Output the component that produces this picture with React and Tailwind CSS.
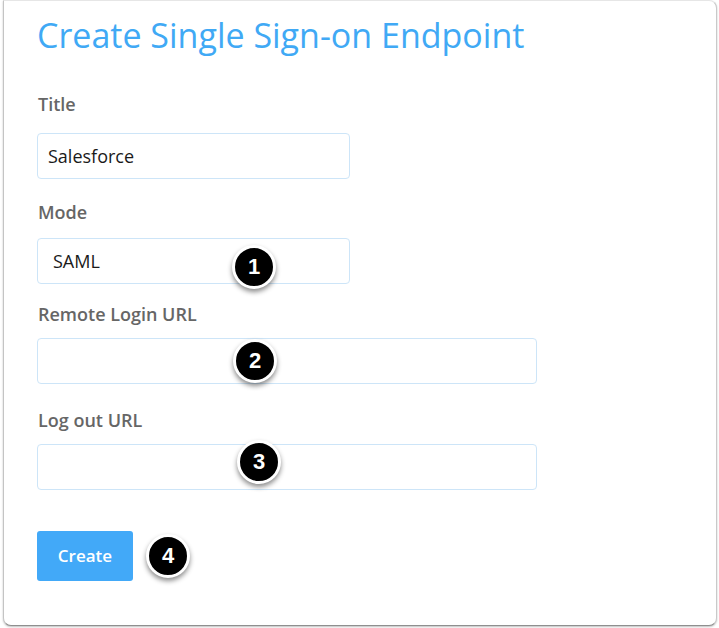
const fields = [
  { label: 'Title', value: 'Salesforce', wide: false, badge: null, labelTop: 'mt-[37px]', inputTop: 'mt-[17px]' },
  { label: 'Mode', value: 'SAML', wide: false, badge: '1', labelTop: 'mt-[21px]', inputTop: 'mt-[14px]', indent: true, badgePos: 'left-[194px] top-[6px]' },
  { label: 'Remote Login URL', value: '', wide: true, badge: '2', labelTop: 'mt-[18px]', inputTop: 'mt-[12px]', badgePos: 'left-[195px] top-[0px]' },
  { label: 'Log out URL', value: '', wide: true, badge: '3', labelTop: 'mt-[24px]', inputTop: 'mt-[12px]', badgePos: 'left-[199px] top-[-5px]' },
];

function Badge({ n }) {
  return (
    <span className="flex h-[44px] w-[44px] items-center justify-center rounded-full border-[3px] border-white bg-black text-[22px] font-bold leading-none text-white shadow-[0_3px_5px_rgba(0,0,0,0.45)] [font-family:'Liberation_Sans',Arial,sans-serif]">
      {n}
    </span>
  );
}

export default function App() {
  return (
    <div className="h-[628px] w-[719px] overflow-hidden bg-white pl-[3px] [font-family:'Open_Sans',Lato,sans-serif]">
      <div className="h-[626px] w-[714px] rounded-b-[8px] rounded-tr-[8px] border border-t-[#e6e6e6] border-r-[#c9c9c9] border-l-[#c4c4c4] border-b-[#8f8f8f] bg-white pl-[33px] pt-[14px] shadow-[0_1px_2px_rgba(0,0,0,0.25)]">
        <h1 className="text-[34px] leading-[40px] font-normal text-[#40a9f5]">Create Single Sign-on Endpoint</h1>

        {fields.map((f) => (
          <div key={f.label}>
            <p className={`${f.labelTop} pl-[1px] text-[18px] leading-[24px] font-semibold text-[#666666]`}>{f.label}</p>
            <div
              className={`${f.inputTop} relative flex h-[46px] items-center rounded-[4px] border border-[#cde5f8] bg-white text-[18px] text-[#1a1a1a] ${
                f.wide ? 'w-[500px]' : 'w-[313px]'
              } ${f.indent ? 'pl-[15px]' : 'pl-[10px]'}`}
            >
              {f.value}
              {f.badge && (
                <div className={`absolute ${f.badgePos}`}>
                  <Badge n={f.badge} />
                </div>
              )}
            </div>
          </div>
        ))}

        <div className="mt-[41px] flex items-center gap-[13px]">
          <button className="h-[50px] w-[96px] rounded-[3px] bg-[#42a9f8] text-[17px] font-semibold text-white">Create</button>
          <Badge n="4" />
        </div>
      </div>
    </div>
  );
}
